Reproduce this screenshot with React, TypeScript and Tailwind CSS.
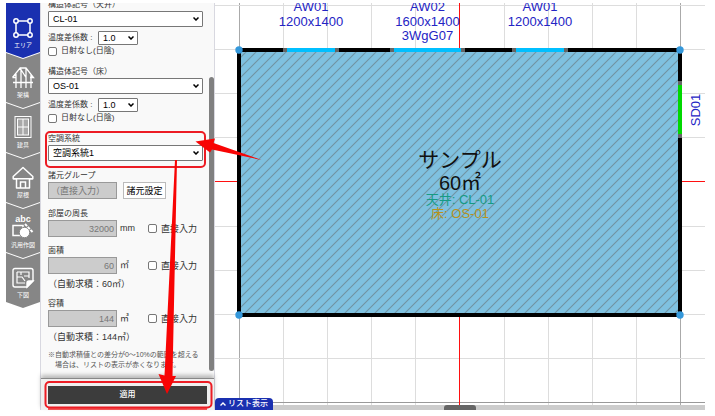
import { useState } from 'react';
import type { ReactNode } from 'react';

const JP = "font-['Liberation_Sans','Noto_Sans_CJK_JP',sans-serif]";

// ナビの矢羽根アイコン
const AreaIcon = () => (
  <svg className="h-[22px] w-[22px]" viewBox="0 0 22 22" fill="none" stroke="currentColor" strokeWidth={1.5}>
    <path d="M6 4h10M6 18h10M4 6v10M18 6v10" />
    <circle cx="4" cy="4" r="2.2" />
    <circle cx="18" cy="4" r="2.2" />
    <circle cx="4" cy="18" r="2.2" />
    <circle cx="18" cy="18" r="2.2" />
  </svg>
);

const FrameIcon = () => (
  <svg className="h-[24px] w-[24px]" viewBox="0 0 24 24" fill="none" stroke="currentColor" strokeWidth={1.3}>
    <path d="M1.500 12.500 9 3l6 9.500M9 3h6l7.500 9.500H19M1.500 12.500H5M5 9v14M10 5v18M15 3v20M20 10v13M2 17.500h20" />
  </svg>
);

const WindowIcon = () => (
  <svg className="h-[24px] w-[18px]" viewBox="0 0 18 24" fill="none" stroke="currentColor">
    <rect x="1" y="1.500" width="16" height="21" />
    <rect x="3.500" y="4" width="11" height="16" fill="#a9a9a9" />
    <path d="M9 4v16M3.500 12h11" />
  </svg>
);

const HouseIcon = () => (
  <svg className="h-[23px] w-[22px]" viewBox="0 0 22 23" fill="none" stroke="currentColor" strokeWidth={1.5}>
    <path d="M11 1.500 1.200 10.500v2.300h3.300V22h13v-9.200h3.300v-2.300z" strokeLinejoin="round" />
    <path d="M1.200 12.800h19.600M8.500 22v-6h5v6" />
  </svg>
);

const DrawIcon = () => (
  <svg className="h-[25px] w-[24px]" viewBox="0 0 24 25" fill="none" stroke="currentColor">
    <text x="12" y="8" textAnchor="middle" fontSize="9" fontWeight="bold" fill="currentColor" stroke="none">abc</text>
    <rect x="2" y="11.500" width="10" height="10" strokeWidth={1.5} />
    <circle cx="13.500" cy="18.500" r="5.200" fill="currentColor" stroke="#868686" />
    <path d="m14 10 8 8.500" strokeWidth={2} strokeDasharray="3 1" />
  </svg>
);

const SheetIcon = () => (
  <svg className="h-[22px] w-[24px]" viewBox="0 0 24 22" fill="none" stroke="currentColor" strokeWidth={1.4}>
    <path d="M4 1.500h16a2 2 0 0 1 2 2V14l-6 6H4a2 2 0 0 1-2-2V3.500a2 2 0 0 1 2-2z" />
    <path d="M22 14h-4a2 2 0 0 0-2 2v4z" fill="currentColor" />
    <path d="M6 5h12v6M6 5v11h8M10 5v3M6 10h5l3 4M13 9h5" strokeWidth={1.2} />
  </svg>
);

const NAV_ITEMS: { label: string; icon: ReactNode }[] = [
  { label: 'エリア', icon: <AreaIcon /> },
  { label: '架構', icon: <FrameIcon /> },
  { label: '建具', icon: <WindowIcon /> },
  { label: '屋根', icon: <HouseIcon /> },
  { label: '汎用作図', icon: <DrawIcon /> },
  { label: '下図', icon: <SheetIcon /> },
];

const SideNav = () => (
  <nav className="flex w-[34px] shrink-0 flex-col bg-white">
    {NAV_ITEMS.map((item, i) => (
      <button
        key={item.label}
        type="button"
        className={`flex h-[55px] shrink-0 flex-col items-center justify-end gap-[2px] pb-[9px] text-[6px] leading-[8px] text-white ${
          i === 0
            ? 'bg-[#1a30b0] [clip-path:polygon(0_0,100%_0,100%_calc(100%-6px),50%_100%,0_calc(100%-6px))]'
            : '-mt-[5px] bg-[#868686] [clip-path:polygon(0_0,50%_6px,100%_0,100%_calc(100%-6px),50%_100%,0_calc(100%-6px))]'
        }`}
      >
        {item.icon}
        <span className="whitespace-nowrap">{item.label}</span>
      </button>
    ))}
  </nav>
);

interface SelectBoxProps {
  id: string;
  value: string;
  small?: boolean;
}

const SelectBox = ({ id, value, small }: SelectBoxProps) => (
  <span className={`relative block ${small ? 'w-[40px]' : 'w-[155px]'}`}>
    <select
      id={id}
      defaultValue={value}
      className={`block w-full appearance-none rounded-[1px] border border-[#777] bg-white pl-[4px] text-[9px] leading-[12px] text-black ${
        small ? 'h-[14px]' : 'h-[16px]'
      }`}
    >
      <option>{value}</option>
    </select>
    <svg
      className="pointer-events-none absolute top-1/2 right-[4px] h-[4px] w-[6px] -translate-y-1/2"
      viewBox="0 0 6 4"
      fill="none"
      stroke="#000"
      strokeWidth={1.5}
    >
      <path d="m.5.5 2.500 2.500L5.500.5" />
    </svg>
  </span>
);

const CheckBox = ({ label, className }: { label: string; className: string }) => (
  <label className={`flex items-center gap-[4px] whitespace-nowrap leading-[10px] ${className}`}>
    <input type="checkbox" className="size-[9px] appearance-none rounded-[2px] border border-[#777] bg-white checked:bg-[#1a30b0]" />
    {label}
  </label>
);

const FieldLabel = ({ htmlFor, children }: { htmlFor: string; children: ReactNode }) => (
  <label htmlFor={htmlFor} className="block text-[8px] leading-[10px] whitespace-nowrap">
    {children}
  </label>
);

// 構造体の入力グループ
const StructureGroup = ({ id, label, value }: { id: string; label: string; value: string }) => (
  <div className="mb-[11px]">
    <FieldLabel htmlFor={id}>{label}</FieldLabel>
    <div className="mt-px">
      <SelectBox id={id} value={value} />
    </div>
    <div className="mt-[4px] flex items-center gap-[5px] text-[8px]">
      <label htmlFor={`${id}-coef`} className="w-[45px] whitespace-nowrap">温度差係数 :</label>
      <SelectBox id={`${id}-coef`} value="1.0" small />
    </div>
    <CheckBox label="日射なし(日陰)" className="mt-px text-[8px]" />
  </div>
);

interface MeasureFieldProps {
  id: string;
  label: string;
  value: string;
  unit: string;
  note?: string;
}

const MeasureField = ({ id, label, value, unit, note }: MeasureFieldProps) => (
  <div className="mb-[9px]">
    <FieldLabel htmlFor={id}>{label}</FieldLabel>
    <div className="mt-px flex items-center text-[9px]">
      <input
        id={id}
        defaultValue={value}
        disabled
        className="h-[17px] w-[69px] border border-[#999] bg-[#ccc] pr-[2px] text-right text-[9px] text-[#777]"
      />
      <span className="w-[31px] pl-[3px]">{unit}</span>
      <CheckBox label="直接入力" className="text-[9px]" />
    </div>
    {note && <p className="mt-[4px] text-[9px] leading-[12px] whitespace-nowrap">{note}</p>}
  </div>
);

const PropertyPanel = () => (
  <section className="flex w-[175px] shrink-0 flex-col border-x border-[#d8d8e0] bg-[#f9f9f9] text-[#333]">
    <div className="flex min-h-0 flex-1 overflow-hidden">
      <div className="-mt-[3px] flex-1 pl-[7px]">
        <StructureGroup id="ceiling" label="構造体記号（天井）" value="CL-01" />
        <StructureGroup id="floor" label="構造体記号（床）" value="OS-01" />
        <div className="mb-[10px]">
          <FieldLabel htmlFor="hvac">空調系統</FieldLabel>
          <div className="mt-px">
            <SelectBox id="hvac" value="空調系統1" />
          </div>
        </div>
        <div className="mb-[10px]">
          <FieldLabel htmlFor="spec">諸元グループ</FieldLabel>
          <div className="mt-px flex gap-[6px]">
            <input
              id="spec"
              defaultValue="（直接入力）"
              disabled
              className="h-[17px] w-[69px] border border-[#999] bg-[#ccc] pl-[2px] text-[9px] text-[#777]"
            />
            <button type="button" className="h-[17px] w-[43px] border border-[#bbb] bg-white text-[9px] leading-[12px] whitespace-nowrap text-black">
              諸元設定
            </button>
          </div>
        </div>
        <MeasureField id="perimeter" label="部屋の周長" value="32000" unit="mm" />
        <MeasureField id="area" label="面積" value="60" unit="㎡" note="（自動求積：60㎡）" />
        <MeasureField id="volume" label="容積" value="144" unit="㎥" note="（自動求積：144㎥）" />
        <p className="-mt-[2px] pl-[7px] -indent-[7px] text-[7px] leading-[10px] whitespace-nowrap text-[#555]">
          ※自動求積値との差分が0～10%の範囲を超える
          <br />
          <span className="block indent-0">場合は、リストの表示が赤くなります。</span>
        </p>
      </div>
      <div className="flex w-[5px] shrink-0 pt-[74px] pb-[7px]">
        <div className="w-full rounded-full bg-[#808080]" />
      </div>
    </div>
    <footer className="flex flex-col border-t border-[#888] bg-[#efefef] px-[7px] pt-[7px] shadow-[0_-3px_4px_rgba(0,0,0,0.25)]">
      <button type="button" className="h-[18px] bg-[#3c3c3c] text-[8px] leading-[18px] font-medium text-white">
        適用
      </button>
      <div className="mt-[4px] h-[2px] bg-[#f25555]" />
    </footer>
  </section>
);

// グリッド線（44px 間隔）
const GRID_X = [24, 68, 112, 156, 200, 289, 333, 377, 421, 465];
const GRID_Y = [2, 46, 90, 134, 223, 267, 311, 355, 399];

const HANDLES = [
  [24, 47],
  [465, 47],
  [24, 312],
  [465, 312],
];

const OPENINGS = [
  { x: 68, w: 56, name: 'AW01', size: '1200x1400', type: '' },
  { x: 175, w: 75, name: 'AW02', size: '1600x1400', type: '3WgG07' },
  { x: 297, w: 56, name: 'AW01', size: '1200x1400', type: '' },
];

const PlanDrawing = () => (
  <svg className="block h-full w-full">
    <defs>
      <pattern id="hatch" width="10" height="10" patternUnits="userSpaceOnUse">
        <rect width="10" height="10" fill="#7fc1e0" />
        <path d="M-1 11 11-1M-1 1 1-1M9 11l2-2" stroke="#7093a2" strokeWidth="1.1" />
      </pattern>
    </defs>
    {GRID_X.map((x) => (
      <rect key={x} x={x} width="1" height="100%" fill={x === 24 || x === 465 ? '#aaa' : '#ddd'} />
    ))}
    {GRID_Y.map((y) => (
      <rect key={y} y={y} width="100%" height="1" fill={y === 399 ? '#999' : '#ddd'} />
    ))}
    {/* 中心線 */}
    <rect x="244" width="1" height="100%" fill="#ff1010" />
    <rect y="178" width="100%" height="1" fill="#ff1010" />

    {/* 部屋 */}
    <rect x="24" y="47" width="441" height="265" fill="url(#hatch)" stroke="#000" strokeWidth="4" />
    {OPENINGS.map((o) => (
      <g key={o.x} fontSize="13" fill="#2424c4" textAnchor="middle">
        <rect x={o.x} y="45" width={o.w} height="4" fill="#666" />
        <rect x={o.x + 4} y="45" width={o.w - 8} height="4" fill="#00bfff" />
        <text x={o.x + o.w / 2} y="8">{o.name}</text>
        <text x={o.x + o.w / 2} y="23">{o.size}</text>
        {o.type && <text x={o.x + o.w / 2} y="37">{o.type}</text>}
      </g>
    ))}
    <rect x="463" y="78" width="4" height="57" fill="#666" />
    <rect x="463" y="82" width="4" height="49" fill="#00d800" />
    <text transform="translate(485 107) rotate(-90)" textAnchor="middle" fontSize="13" fill="#2424c4">SD01</text>
    {HANDLES.map(([x, y]) => (
      <circle key={`${x}-${y}`} cx={x} cy={y} r="3.700" fill="#3498db" />
    ))}

    <g textAnchor="middle">
      <text x="245" y="164" fontSize="21" fill="#111">サンプル</text>
      <text x="245" y="187" fontSize="20" fill="#111">60㎡</text>
      <text x="245" y="201" fontSize="13" fill="#169b84">天井: CL-01</text>
      <text x="245" y="215" fontSize="13" fill="#b8921c">床: OS-01</text>
    </g>
  </svg>
);

// 操作説明の赤枠と矢印
const Annotations = () => (
  <svg className="pointer-events-none absolute inset-0 h-full w-full">
    <g fill="none" stroke="#ec1c24" strokeWidth="2">
      <rect x="46" y="132" width="159" height="35" rx="4" />
      <rect x="45.500" y="382" width="166" height="25.500" rx="4" />
    </g>
    <g fill="#f80404">
      <path d="M195.500 141.500 215 138.500l-1.500 4.500L261.500 160 212 149.500l-2 3z" />
      <path d="M175 160h2l-4.500 216h3.500l-9 18-8.500-20 6 1.500z" />
    </g>
  </svg>
);

export default function App() {
  const [listOpen, setListOpen] = useState(false);

  return (
    <div className={`relative flex h-screen overflow-hidden bg-white pt-[3px] pr-[10px] pb-[6px] pl-[6px] ${JP}`} lang="ja">
      <SideNav />
      <PropertyPanel />
      <main className="relative flex min-w-0 flex-1 flex-col">
        <div className="min-h-0 flex-1 overflow-hidden">
          <PlanDrawing />
        </div>
        <div className="flex h-[5px] shrink-0 justify-center bg-[#ccc]">
          <div className="w-[32px] rounded-t-[3px] bg-[#666]" />
        </div>
        <button
          type="button"
          onClick={() => setListOpen(!listOpen)}
          aria-expanded={listOpen}
          className="absolute bottom-0 left-0 flex h-[12px] w-[58px] items-center justify-center gap-[2px] rounded-t-[4px] bg-[#1a30b0] text-[8px] leading-[12px] font-medium whitespace-nowrap text-white"
        >
          <svg className="h-[4px] w-[6px]" viewBox="0 0 6 4" fill="none" stroke="currentColor" strokeWidth={1.4}>
            <path d="m.5 3.500 2.500-2.500 2.500 2.500" />
          </svg>
          リスト表示
        </button>
      </main>
      <Annotations />
    </div>
  );
}
